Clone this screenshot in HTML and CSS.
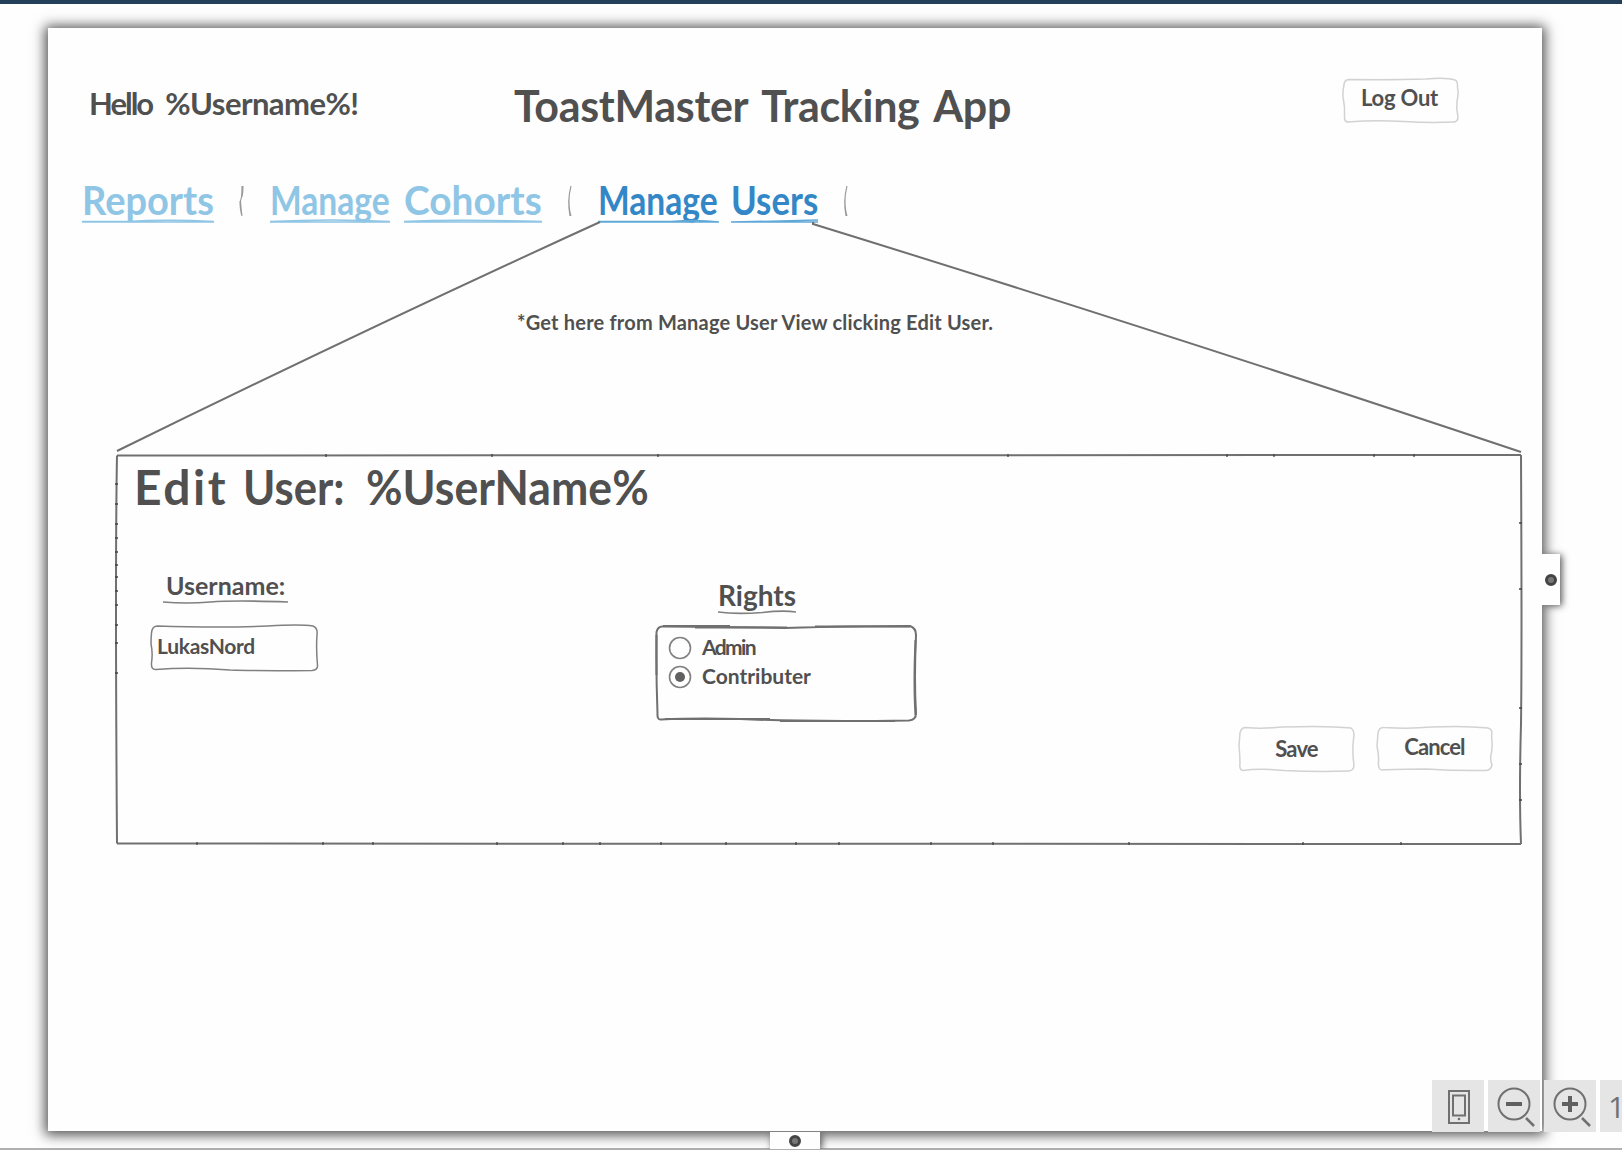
FILE: index.html
```html
<!DOCTYPE html>
<html lang="en">
<head>
<meta charset="utf-8">
<title>ToastMaster Tracking App</title>
<link rel="stylesheet" href="styles.css">
</head>
<body>
<div class="topbar"></div>
<main class="workspace">
  <div class="page">
    <header class="header">
      <div class="hello"><span class="greet">Hello</span> %Username%!</div>
      <h1 class="title">ToastMaster Tracking App</h1>
      <button class="btn logout"><svg class="sketch" viewBox="0 0 117 46"><path d="M2 7Q2 2 7 1.500Q50 2 84 1Q104-1 113 2Q116 3 115.500 10Q117 14 115 23Q114 31 116 39Q116 44 111 44Q88 45 62 43.500Q31 42 6 44Q2 44 2.500 38Q3 29 1.500 22Q0 16 2 7Z"/></svg><span>Log Out</span></button>
    </header>

    <nav class="nav">
      <a class="word w-reports"><span>Reports</span><svg class="rule" viewBox="0 0 132 4" preserveAspectRatio="none"><path d="M0 2.500H45Q85 0 132 2.500M0 3H132"/></svg></a>
      <svg class="sep" viewBox="0 0 8 32"><path d="M4 1Q4 8 3.500 12L2.500 16Q3 24 4 31M5 1Q5 7 4 12M2 16Q2 25 4 31"/></svg>
      <a class="word w-manage"><span>Manage</span><svg class="rule" viewBox="0 0 132 4" preserveAspectRatio="none"><path d="M0 2.500Q70-.5 132 2.500M0 3H132"/></svg></a>
      <a class="word w-cohorts"><span>Cohorts</span><svg class="rule" viewBox="0 0 132 4" preserveAspectRatio="none"><path d="M0 2.500Q50 0 132 2.500M0 3H132"/></svg></a>
      <svg class="sep" viewBox="0 0 8 32"><path d="M5 1Q1 16 4 31M5 1Q3 9 3 15Q3 25 5 31"/></svg>
      <a class="word active w-manage2"><span>Manage</span><svg class="rule" viewBox="0 0 132 4" preserveAspectRatio="none"><path d="M0 2.500H80Q108 0 132 3M0 3H132"/></svg></a>
      <a class="word active w-users"><span>Users</span><svg class="rule" viewBox="0 0 132 4" preserveAspectRatio="none"><path d="M0 3Q60 2 132 1M0 3H132"/></svg></a>
      <svg class="sep" viewBox="0 0 8 32"><path d="M5 1Q1 16 4 31M5 1Q3 9 3 15Q3 25 5 31"/></svg>
    </nav>

    <section class="callout">
      <svg class="rays" viewBox="48 224 1494 230"><path d="M600 222Q370 327 117 451"/><path d="M813 222V224Q1150 328 1521 452"/></svg>
      <p class="note">*Get here from Manage User View clicking Edit User.</p>
    </section>

    <section class="panel">
      <svg class="frame" viewBox="0 0 1406 391"><path d="M1 1.500Q700 0 1405 1M1405 1Q1406 200 1405 270Q1403 340 1405 390M1405 390Q700 388 1 389.500M1 389.500Q-1 110 1 1.500"/><path class="ticks" d="M-1 30h3m-3 20h3m-3 20h3m-3 14h3m-3 14h3m-3 13h3m-3 12h3m-3 14h3m-3 14h3m-3 20h3m-3 18h3m-3 30h3M1403 69h3m-3 66h3m-3 119h3m-3 56h3m-3 36h3M81 388v3M207 388v3M257 388v3M381 388v3M447 388v3M484 388v3M545 388v3M610 388v3M680 388v3M723 388v3M815 388v3M877 388v3M1013 388v3M1187 388v3M1285 388v3M210 0v3M376 0v3M542 0v3M892 0v3M1111 0v3M1158 0v3M1258 0v3M1298 0v3"/></svg>
      <h2 class="panel-title"><span class="t1">Edit</span><span class="t2">User:</span><span class="t3">%UserName%</span></h2>
      <div class="fields">
        <div class="field">
          <label class="label label-user"><span>Username:</span><svg class="rule" viewBox="0 0 132 4" preserveAspectRatio="none"><path d="M0 2Q25 4 50 2T132 2"/></svg></label>
          <div class="input"><svg class="sketch" viewBox="0 0 168 46"><path d="M1.500 8Q2 1.500 7 1Q70 3 118 1Q150-1 163 1Q168 3 167 10Q166 24 167.500 40Q168 45 162 45.500Q105 46 80 45Q40 42 6 44.500Q1 45 1.500 38Q3 28 1 19Q1 13 1.500 8Z"/></svg><span>LukasNord</span></div>
        </div>
        <div class="rights">
          <div class="label label-rights"><span>Rights</span><svg class="rule" viewBox="0 0 132 4" preserveAspectRatio="none"><path d="M0 2Q30 4.500 75 2.500Q110 0 132 2"/></svg></div>
          <div class="options">
            <svg class="sketch" viewBox="0 0 262 96"><path d="M1.500 7Q3 1 8 1.500Q80 2 130 3Q200 1 255 1Q261 3 261 10Q259 55 261 88Q261 95 254 95.500Q150 97 85 94Q40 93 6 94.500Q2 95 2.500 88Q1 50 1.500 7Z"/><path d="M8 1H75M40 2.500H132M160 1.500H255M10 94H115M125 96H240M1.500 10V50M260.500 15Q258.500 60 260.500 90"/></svg>
            <div class="option"><svg class="radio" viewBox="0 0 24 24"><circle cx="12" cy="12" r="10.500"/></svg><span class="o1">Admin</span></div>
            <div class="option"><svg class="radio" viewBox="0 0 24 24"><circle cx="12" cy="12" r="10.500"/><circle class="dot" cx="12" cy="12" r="5"/></svg><span class="o2">Contributer</span></div>
          </div>
        </div>
      </div>
      <div class="actions">
        <button class="btn save"><svg class="sketch" viewBox="0 0 117 46"><path d="M2 7Q3 2 7 1.500Q25 3 44 1Q90-.5 113 2Q117 5 115.500 13Q114 26 116 39Q116 45 110 45Q80 46 46 44.500Q20 42 5 44.500Q1 44 2 37Q2 30 1 20Z"/></svg><span>Save</span></button>
        <button class="btn cancel"><svg class="sketch" viewBox="0 0 117 46"><path d="M2 7Q3 1 8 1.500Q35 3 55 1Q90-.5 112 2Q117 3 115.500 10Q117 20 115 29Q114 34 116 39Q115 44 110 44.500Q80 45 50 43Q20 43 6 44Q2 44 2.500 36Q3 29 1 20Z"/></svg><span>Cancel</span></button>
      </div>
    </section>
    <div class="handle handle-right"><i></i></div>
    <div class="handle handle-bottom"><i></i></div>
  </div>
  <div class="tools">
    <div class="tool"><svg viewBox="0 0 52 52"><path d="M17 11H37V43H17ZM21 15.500H33V35.500H21Z" stroke-width="2"/><circle class="solid" cx="27" cy="39" r="1.300"/></svg></div>
    <div class="tool"><svg viewBox="0 0 52 52"><circle cx="26" cy="24" r="15.500" stroke-width="2"/><path d="M38 38L46 46" stroke-width="2.500"/><path class="sign" d="M18 24H34"/></svg></div>
    <div class="tool"><svg viewBox="0 0 52 52"><circle cx="26" cy="24" r="15.500" stroke-width="2"/><path d="M38 38L46 46" stroke-width="2.500"/><path class="sign" d="M18 24H34M26 16V32"/></svg></div>
    <div class="tool tool-text">1</div>
  </div>
</main>
</body>
</html>
```
FILE: styles.css
```css
* { box-sizing: border-box; }
body {
  margin: 0;
  height: 1150px;
  overflow: hidden;
  display: flex;
  flex-direction: column;
  background: #fefefe;
  color: #505050;
  font-family: Lato, "Liberation Sans", sans-serif;
  font-weight: 700;
}
svg { fill: none; overflow: visible; display: block; }
.topbar { height: 4px; background: #243f5a; flex: none; }
.workspace {
  position: relative;
  flex: 1;
  padding: 24px 0 0 48px;
  border-bottom: 2px solid #b0b0b0;
}
.page {
  position: relative;
  width: 1494px;
  height: 1103px;
  background: #fefefe;
  box-shadow: 0 1px 12px 3px #505050;
}
.header {
  height: 146px;
  padding: 50px 83px 0 41px;
  display: flex;
  align-items: flex-start;
}
.hello { width: 425px; margin-top: 3px; font-size: 31px; line-height: 44px; letter-spacing: -.55px; white-space: nowrap; }
.greet { margin-right: 6px; letter-spacing: -2px; }
.title { flex: 1; margin: 6px 0 0; font-size: 43px; line-height: 44px; font-weight: 700; letter-spacing: -.3px; word-spacing: 5px; white-space: nowrap; }
.btn {
  position: relative;
  width: 117px;
  height: 46px;
  padding: 0;
  border: 0;
  background: none;
  color: inherit;
  font: inherit;
  font-size: 22px;
  line-height: 46px;
}
.btn span { position: relative; display: block; white-space: nowrap; }
.sketch { position: absolute; inset: 0; width: 100%; height: 100%; stroke: #808080; stroke-width: 1.5; }
.btn .sketch { stroke: #d2d2d2; }
.logout span { top: -3px; left: -1px; letter-spacing: -.2px; }
.save span { letter-spacing: -.8px; }
.cancel span { top: -2px; letter-spacing: -.9px; }
.nav { display: flex; height: 50px; padding-left: 34px; font-size: 40px; line-height: 52px; color: #8fc5e5; }
.word { position: relative; white-space: nowrap; }
.word span { display: inline-block; transform-origin: 0 50%; }
.word.active { color: #3487c7; }
.rule { position: absolute; left: 0; bottom: 1px; width: 100%; height: 4px; stroke: #8fc5e5; stroke-width: 1.3; }
.active .rule { stroke: #5fa8d8; }
.w-reports { width: 132px; }
.w-reports span { transform: scaleX(.95); }
.w-manage { width: 120px; }
.w-manage span, .w-manage2 span { transform: scaleX(.84); }
.w-cohorts { width: 138px; margin-left: 14px; }
.w-cohorts span { transform: scaleX(.97); }
.w-manage2 { width: 121px; }
.w-users { width: 87px; margin-left: 12px; }
.w-users span { transform: scaleX(.87); }
.sep { width: 8px; height: 32px; margin: 11px 24px 0; stroke: #999; stroke-width: 1.1; }
.callout { position: relative; height: 230px; padding: 86px 0 0 469px; }
.rays { position: absolute; inset: 0; width: 1494px; height: 230px; stroke: #707070; stroke-width: 2; }
.note { position: relative; margin: 0; font-size: 20px; line-height: 24px; letter-spacing: .2px; white-space: nowrap; }
.panel { position: relative; width: 1406px; height: 391px; margin-left: 68px; }
.frame { position: absolute; inset: 0; width: 100%; height: 100%; stroke: #707070; stroke-width: 2; }
.frame .ticks { stroke: #444; stroke-width: 1.3; }
.panel-title { display: flex; margin: 0; padding: 3px 0 0 18px; font-size: 48px; line-height: 60px; }
.panel-title span { white-space: nowrap; transform-origin: 0 50%; }
.t1 { width: 109px; letter-spacing: 2.5px; }
.t2 { width: 123px; transform: scaleX(.91); }
.t3 { transform: scaleX(.93); }
.fields { display: flex; height: 209px; padding: 53px 0 0 34px; }
.field { width: 505px; }
.label { position: relative; display: block; }
.label .rule { stroke: #808080; stroke-width: 1.7; }
.label-user { width: 125px; height: 35px; margin-left: 13px; font-size: 25px; line-height: 30px; }
.label-user span { padding-left: 3px; }
.label-rights { width: 78px; height: 35px; margin: 8px 0 0 63px; font-size: 28px; line-height: 34px; }
.label-rights .rule { bottom: -1px; }
.input { position: relative; width: 168px; height: 46px; margin-top: 20px; padding-left: 7px; font-size: 21px; line-height: 42px; letter-spacing: -.3px; }
.rights { width: 262px; }
.options { position: relative; height: 96px; margin-top: 12px; padding: 9px 0 0 13px; }
.options .sketch { stroke: #707070; stroke-width: 2; }
.option { display: flex; height: 29px; font-size: 21px; line-height: 25px; }
.o1 { letter-spacing: -1.6px; }
.radio { width: 24px; height: 24px; margin: 2px 10px 0 0; stroke: #808080; stroke-width: 1.6; }
.radio .dot { fill: #606060; stroke: none; }
.actions { display: flex; justify-content: flex-end; gap: 21px; padding-right: 29px; }
.handle { position: absolute; display: flex; align-items: center; justify-content: center; background: #fefefe; box-shadow: 2px 1px 7px #555; }
.handle i { width: 12px; height: 12px; border-radius: 50%; background: #777; border: 3px solid #444; }
.handle-right { left: 1494px; top: 526px; width: 18px; height: 51px; clip-path: inset(-12px -12px -12px 0); }
.handle-bottom { left: 722px; top: 1104px; width: 50px; height: 17px; clip-path: inset(0 -12px 0 -12px); }
.tools { position: absolute; left: 1432px; top: 1076px; display: flex; gap: 4px; }
.tool { width: 52px; height: 52px; background: #e5e5e5; stroke: #707070; }
.tool .solid { fill: #707070; stroke: none; }
.tool .sign { stroke: #606060; stroke-width: 4; }
.tool-text { padding-left: 8px; font-size: 30px; line-height: 53px; color: #707070; font-family: "Open Sans", sans-serif; font-weight: 400; }
```
